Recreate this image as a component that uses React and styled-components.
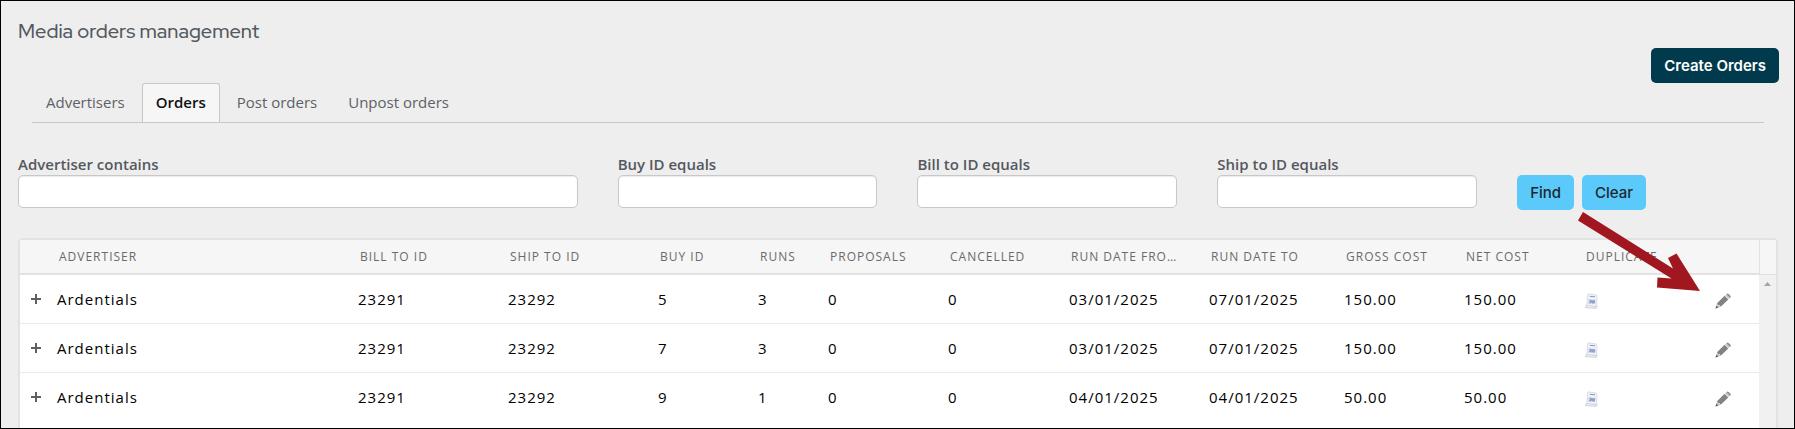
import React, { useState } from 'react';
import styled, { createGlobalStyle, css } from 'styled-components';

const GlobalStyle = createGlobalStyle`
  * {
    box-sizing: border-box;
  }

  body {
    margin: 0;
    background: #eeeeee;
    color: #54585f;
    font-family: 'Open Sans', 'Noto Sans', sans-serif;
    font-size: 15px;
    line-height: 20px;
  }

  button,
  input {
    font: inherit;
  }
`;

const Page = styled.div`
  position: relative;
  display: flex;
  flex-direction: column;
  min-height: 100vh;
  padding: 15px 15px 0 17px;
  border: 1px solid #000;
`;

const Title = styled.h1`
  margin: 0 0 2px;
  color: #54585f;
  font-family: 'Red Hat Display', Lato, sans-serif;
  font-size: 20px;
  font-weight: 500;
  line-height: 30px;
`;

const Actions = styled.div`
  display: flex;
  justify-content: flex-end;
`;

const Button = styled.button`
  height: 35px;
  padding: 0 13px;
  border: 0;
  border-radius: 5px;
  background: #5bcafa;
  color: #1d2730;
  font-family: Inter, sans-serif;
  font-size: 15px;
  font-weight: 500;
  cursor: pointer;

  ${props =>
    props.$primary &&
    css`
      background: #023a4d;
      color: #fff;
      font-weight: 600;
    `}
`;

const Tabs = styled.div`
  display: flex;
  gap: 3px;
  margin: 0 15px 0 14px;
  border-bottom: 1px solid #c8c8c8;
`;

const Tab = styled.button`
  height: 39px;
  padding: 0 13px 2px;
  border: 1px solid transparent;
  border-bottom: 0;
  border-radius: 3px 3px 0 0;
  background: transparent;
  color: #5d6166;
  cursor: pointer;

  ${props =>
    props.$active &&
    css`
      border-color: #c8c8c8;
      background: #f6f6f6;
      color: #111;
      font-weight: 600;
    `}
`;

const Filters = styled.form`
  display: grid;
  grid-template-columns: 28fr 13fr 13fr 13fr 13fr;
  gap: 40px;
  align-items: end;
  margin: 31px 2px 28px 0;
`;

const Field = styled.label`
  display: flex;
  flex-direction: column;
  gap: 1px;
  padding-bottom: 2px;
  font-weight: 600;
`;

const Input = styled.input`
  width: 100%;
  height: 33px;
  padding: 0 8px;
  border: 1px solid #c8c8c8;
  border-radius: 5px;
  background: #fff;
  box-shadow: inset 0 1px 1px #ececec;
  font-weight: 400;
`;

const FilterButtons = styled.div`
  display: flex;
  gap: 8px;
`;

const Panel = styled.div`
  display: flex;
  flex: 1;
  margin-right: 1px;
  border: 2px solid #e2e2e2;
  border-bottom: 0;
  border-radius: 5px 5px 0 0;
  background: #fff;
`;

const TableArea = styled.div`
  flex: 1;
  min-width: 0;
`;

const Table = styled.table`
  width: 100%;
  table-layout: fixed;
  border-collapse: separate;
  border-spacing: 0;
  color: #000;
  letter-spacing: 1px;
`;

const HeadCell = styled.th`
  height: 35px;
  padding: 0 24px 0 10px;
  overflow: hidden;
  border-bottom: 2px solid #e2e2e2;
  background: #f6f6f6;
  color: #6a6a6a;
  font-size: 12px;
  font-weight: 400;
  text-align: left;
  text-overflow: ellipsis;
  text-transform: uppercase;
  white-space: nowrap;
`;

const Cell = styled.td`
  height: 49px;
  padding: 0 0 0 8px;
  border-bottom: 1px solid #e9e9e9;
  white-space: nowrap;

  tr:last-child > & {
    border-bottom-color: transparent;
  }
`;

const IconButton = styled.button`
  display: flex;
  padding: 0;
  border: 0;
  background: transparent;
  color: #666;
  cursor: pointer;
`;

const ExpandCell = styled(Cell)`
  padding-left: 11px;
`;

const DuplicateCell = styled(Cell)`
  padding: 3px 0 0 9px;
`;

const EditCell = styled(Cell)`
  padding: 3px 0 0 19px;
`;

const ScrollGutter = styled.div`
  display: flex;
  flex-direction: column;
  width: 17px;
`;

const ScrollHead = styled.div`
  height: 35px;
  border-left: 1px solid #e2e2e2;
  border-bottom: 1px solid #e2e2e2;
  background: #f6f6f6;
`;

const ScrollTrack = styled.div`
  display: flex;
  flex: 1;
  justify-content: center;
  padding-top: 7px;
  background: #f1f1f1;
`;

const Callout = styled.svg`
  position: absolute;
  top: 210px;
  right: 93px;
  pointer-events: none;
`;

const columns = [
  { key: 'advertiser', label: 'Advertiser', width: 301 },
  { key: 'billTo', label: 'Bill to ID', width: 150 },
  { key: 'shipTo', label: 'Ship to ID', width: 150 },
  { key: 'buyId', label: 'Buy ID', width: 100 },
  { key: 'runs', label: 'Runs', width: 70 },
  { key: 'proposals', label: 'Proposals', width: 120 },
  { key: 'cancelled', label: 'Cancelled', width: 121 },
  { key: 'dateFrom', label: 'Run date from', width: 140 },
  { key: 'dateTo', label: 'Run date to', width: 135 },
  { key: 'gross', label: 'Gross cost', width: 120 },
  { key: 'net', label: 'Net cost', width: 120 },
];

const orders = [
  {
    advertiser: 'Ardentials', billTo: '23291', shipTo: '23292', buyId: '5', runs: '3', proposals: '0',
    cancelled: '0', dateFrom: '03/01/2025', dateTo: '07/01/2025', gross: '150.00', net: '150.00',
  },
  {
    advertiser: 'Ardentials', billTo: '23291', shipTo: '23292', buyId: '7', runs: '3', proposals: '0',
    cancelled: '0', dateFrom: '03/01/2025', dateTo: '07/01/2025', gross: '150.00', net: '150.00',
  },
  {
    advertiser: 'Ardentials', billTo: '23291', shipTo: '23292', buyId: '9', runs: '1', proposals: '0',
    cancelled: '0', dateFrom: '04/01/2025', dateTo: '04/01/2025', gross: '50.00', net: '50.00',
  },
];

const tabs = ['Advertisers', 'Orders', 'Post orders', 'Unpost orders'];

const filterFields = [
  { id: 'advertiser', label: 'Advertiser contains' },
  { id: 'buyId', label: 'Buy ID equals' },
  { id: 'billTo', label: 'Bill to ID equals' },
  { id: 'shipTo', label: 'Ship to ID equals' },
];

const PlusIcon = () => (
  <svg width="10" height="10" viewBox="0 0 10 10" fill="#5f5f5f">
    <path d="M4 0h2v4h4v2H6v4H4V6H0V4h4z" />
  </svg>
);

const PencilIcon = () => (
  <svg width="16" height="16" viewBox="0 0 16 16">
    <path d="M.5 15.500l1.500-5L5.500 14z" fill="#c4c4c4" />
    <path d="M.5 15.500l.9-2.700 1.800 1.800z" fill="#555" />
    <path d="M2 10.200L9.600 2.800l3.700 3.600-7.600 7.400-.9-1.500-1.500-.4z" fill="#828282" />
    <path d="M10.100 2.400l1-.9 3.600 3.400-1 1z" fill="#c4c4c4" />
    <path d="M11.600 1.100q1-1 2 0L15.400 2.800q.8.900 0 1.700l-.4.400-3.600-3.400z" fill="#8c8c8c" />
  </svg>
);

const DuplicateIcon = () => (
  <svg width="14" height="16" viewBox="0 0 14 16">
    <path d="M2.600 2L3.400.6l1 .5 6.900.9L12 4l-.5 8 .9 1-.6 1.800L1 14l.8-2z" fill="#f0f3fa" stroke="#d0d5e0" strokeWidth=".8" />
    <path d="M.6 14.600l.8-2 9.800 1-.4 1.700z" fill="#fbfbfd" stroke="#c0c4cd" strokeWidth=".8" />
    <path d="M4.800 3.300l5.200.5" stroke="#8c96ae" />
    <path d="M3.400 6l7.200.7-.4 4.600-7.200-.6z" fill="#d3dcf1" />
    <path d="M4.400 7.300l2 .2-.2 2.300-2-.2M7.600 7.600l2 .2-.2 2.300-2-.2zM4.800 8.500l1.600.1M7.600 8.800l1.600.1" fill="none" stroke="#7b8ab3" strokeWidth=".8" />
  </svg>
);

const App = () => {
  const [activeTab, setActiveTab] = useState('Orders');

  return (
    <Page>
      <GlobalStyle />
      <Title>Media orders management</Title>
      <Actions>
        <Button type="button" $primary>
          Create Orders
        </Button>
      </Actions>
      <Tabs role="tablist">
        {tabs.map(tab => (
          <Tab
            key={tab}
            type="button"
            role="tab"
            aria-selected={tab === activeTab}
            $active={tab === activeTab}
            onClick={() => setActiveTab(tab)}
          >
            {tab}
          </Tab>
        ))}
      </Tabs>
      <Filters onSubmit={e => e.preventDefault()}>
        {filterFields.map(field => (
          <Field key={field.id} htmlFor={field.id}>
            {field.label}
            <Input id={field.id} type="text" />
          </Field>
        ))}
        <FilterButtons>
          <Button type="submit">Find</Button>
          <Button type="reset">Clear</Button>
        </FilterButtons>
      </Filters>
      <Panel>
        <TableArea>
          <Table>
            <colgroup>
              <col width="29" />
              {columns.map(column => (
                <col key={column.key} width={column.width} />
              ))}
              <col width="120" />
              <col width="63" />
            </colgroup>
            <thead>
              <tr>
                <HeadCell />
                {columns.map(column => (
                  <HeadCell key={column.key}>{column.label}</HeadCell>
                ))}
                <HeadCell>Duplicate</HeadCell>
                <HeadCell />
              </tr>
            </thead>
            <tbody>
              {orders.map(order => (
                <tr key={order.buyId}>
                  <ExpandCell>
                    <IconButton type="button" aria-label="Expand">
                      <PlusIcon />
                    </IconButton>
                  </ExpandCell>
                  {columns.map(column => (
                    <Cell key={column.key}>{order[column.key]}</Cell>
                  ))}
                  <DuplicateCell>
                    <IconButton type="button" aria-label="Duplicate">
                      <DuplicateIcon />
                    </IconButton>
                  </DuplicateCell>
                  <EditCell>
                    <IconButton type="button" aria-label="Edit">
                      <PencilIcon />
                    </IconButton>
                  </EditCell>
                </tr>
              ))}
            </tbody>
          </Table>
        </TableArea>
        <ScrollGutter>
          <ScrollHead />
          <ScrollTrack>
            <svg width="7" height="4" viewBox="0 0 7 4">
              <path d="M0 4L3.500 0 7 4z" fill="#a3a3a3" />
            </svg>
          </ScrollTrack>
        </ScrollGutter>
      </Panel>
      <Callout width="124" height="82" viewBox="0 0 124 82" fill="#a0171f">
        <path d="M6 1l90 56.500-5-10.500 8.500-4.500L123 80l-43-3.500.500-10 14 1L1 9.500z" />
      </Callout>
    </Page>
  );
};

export default App;
